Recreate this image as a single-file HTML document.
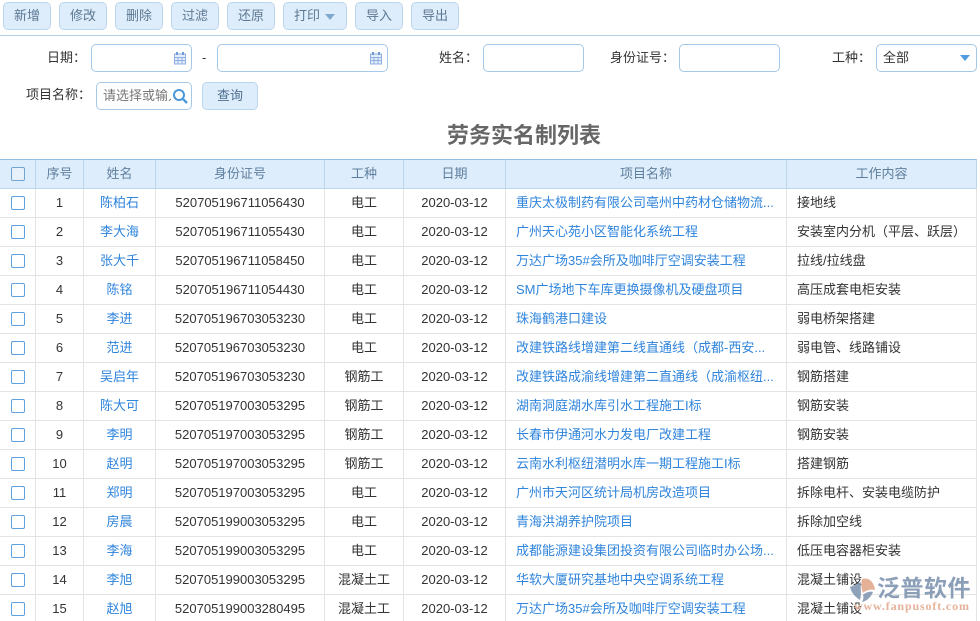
<!DOCTYPE html>
<html lang="zh"><head><meta charset="utf-8"><title>劳务实名制列表</title>
<style>
html,body{margin:0;padding:0;background:#fff}
#p{position:relative;width:980px;height:621px;overflow:hidden;background:#fff;font:13px/1 "Liberation Sans","Noto Sans CJK SC",sans-serif;color:#333}
#p *{box-sizing:border-box}
.a{position:absolute}
.b{position:absolute;top:2px;height:28px;width:48px;border:1px solid #bcd6ec;border-radius:5px;background:#deedfb;color:#5c7892;text-align:center;line-height:26px;font-size:13px}
.l{position:absolute;line-height:16px;color:#333;white-space:pre}
.i{position:absolute;height:28px;border:1px solid #a5c8e6;border-radius:5px;background:#fff}
.cal{position:absolute;right:4px;top:6px}
table{position:absolute;left:0;top:159px;width:977px;border-collapse:separate;border-spacing:0;table-layout:fixed;font-size:13px}
th,td{padding:0 0 2px;text-align:center;overflow:hidden;white-space:nowrap}
th{height:30px;background:#deedfb;color:#5f7f9e;font-weight:normal;border-top:1px solid #8fbce2;border-right:1px solid #bcd6ec;border-bottom:1px solid #bcd6ec}
td{height:29px;border-right:1px solid #e3e3e3;border-bottom:1px solid #e3e3e3;color:#333}
td.n{color:#2f84dc}
td.t{text-align:left;padding-left:10px;color:#2f84dc}
td.c{text-align:left;padding-left:10px}
.k{display:inline-block;position:relative;top:1px;width:14px;height:14px;border:1px solid #5da2de;border-radius:2px;background:#fff;vertical-align:middle}
th .k{border-color:#6fa6d6;background:#e6f1fb}
</style></head><body><div id="p">
<div class="b" style="left:3px">新增</div>
<div class="b" style="left:59px">修改</div>
<div class="b" style="left:115px">删除</div>
<div class="b" style="left:171px">过滤</div>
<div class="b" style="left:227px">还原</div>
<div class="b" style="left:283px;width:64px;text-align:left;padding-left:10px">打印<span class="a" style="left:41px;top:11px;width:0;height:0;border-left:5px solid transparent;border-right:5px solid transparent;border-top:6px solid #7fa8d0"></span></div>
<div class="b" style="left:355px">导入</div>
<div class="b" style="left:411px">导出</div>
<div class="a" style="left:0;top:35px;width:980px;height:1px;background:#b5cfe6"></div>

<div class="l" style="left:47px;top:50px">日期：</div>
<div class="i" style="left:91px;top:44px;width:101px"><svg class="cal" width="14" height="14" viewBox="0 0 14 14"><rect x="1.5" y="3" width="11" height="10" fill="#e4ecfa" stroke="#8fb0e0"/><path d="M1.5 6.5h11M1.5 9.5h11M5 6.5v6.5M9 6.5v6.5" stroke="#8fb0e0"/><path d="M4 1v3M10 1v3" stroke="#6f98d8" stroke-width="2"/></svg></div>
<div class="l" style="left:202px;top:50px">-</div>
<div class="i" style="left:217px;top:44px;width:171px"><svg class="cal" width="14" height="14" viewBox="0 0 14 14"><rect x="1.5" y="3" width="11" height="10" fill="#e4ecfa" stroke="#8fb0e0"/><path d="M1.5 6.5h11M1.5 9.5h11M5 6.5v6.5M9 6.5v6.5" stroke="#8fb0e0"/><path d="M4 1v3M10 1v3" stroke="#6f98d8" stroke-width="2"/></svg></div>
<div class="l" style="left:439px;top:50px">姓名：</div>
<div class="i" style="left:483px;top:44px;width:101px"></div>
<div class="l" style="left:610px;top:50px">身份证号：</div>
<div class="i" style="left:679px;top:44px;width:101px"></div>
<div class="l" style="left:832px;top:50px">工种：</div>
<div class="i" style="left:876px;top:44px;width:101px"><span class="a" style="left:6px;top:5px;line-height:16px">全部</span><span class="a" style="left:83px;top:10px;width:0;height:0;border-left:5px solid transparent;border-right:5px solid transparent;border-top:6px solid #4f9be0"></span></div>
<div class="l" style="left:26px;top:87px">项目名称：</div>
<div class="i" style="left:96px;top:82px;width:96px"><span class="a" style="left:6px;top:5px;width:68px;overflow:hidden;line-height:16px;color:#777;white-space:nowrap">请选择或输入</span><svg class="a" style="left:75px;top:5px" width="17" height="17" viewBox="0 0 17 17"><circle cx="7" cy="7" r="5" fill="none" stroke="#4a97dc" stroke-width="2"/><path d="M10.8 10.8L15 15" stroke="#4a97dc" stroke-width="2.4"/></svg></div>
<div class="b" style="left:202px;top:82px;width:56px;color:#4f6f8f">查询</div>
<div class="a" style="left:0;top:124px;width:1048px;text-align:center;font-size:22px;font-weight:bold;line-height:24px;color:#666">劳务实名制列表</div>

<table>
<colgroup><col style="width:36px"><col style="width:48px"><col style="width:72px"><col style="width:169px"><col style="width:79px"><col style="width:102px"><col style="width:281px"><col style="width:190px"></colgroup>
<tr><th><span class="k"></span></th><th>序号</th><th>姓名</th><th>身份证号</th><th>工种</th><th>日期</th><th>项目名称</th><th>工作内容</th></tr>
<tr><td><span class="k"></span></td><td>1</td><td class="n">陈柏石</td><td>520705196711056430</td><td>电工</td><td>2020-03-12</td><td class="t">重庆太极制药有限公司亳州中药材仓储物流...</td><td class="c">接地线</td></tr>
<tr><td><span class="k"></span></td><td>2</td><td class="n">李大海</td><td>520705196711055430</td><td>电工</td><td>2020-03-12</td><td class="t">广州天心苑小区智能化系统工程</td><td class="c">安装室内分机（平层、跃层）</td></tr>
<tr><td><span class="k"></span></td><td>3</td><td class="n">张大千</td><td>520705196711058450</td><td>电工</td><td>2020-03-12</td><td class="t">万达广场35#会所及咖啡厅空调安装工程</td><td class="c">拉线/拉线盘</td></tr>
<tr><td><span class="k"></span></td><td>4</td><td class="n">陈铭</td><td>520705196711054430</td><td>电工</td><td>2020-03-12</td><td class="t">SM广场地下车库更换摄像机及硬盘项目</td><td class="c">高压成套电柜安装</td></tr>
<tr><td><span class="k"></span></td><td>5</td><td class="n">李进</td><td>520705196703053230</td><td>电工</td><td>2020-03-12</td><td class="t">珠海鹤港口建设</td><td class="c">弱电桥架搭建</td></tr>
<tr><td><span class="k"></span></td><td>6</td><td class="n">范进</td><td>520705196703053230</td><td>电工</td><td>2020-03-12</td><td class="t">改建铁路线增建第二线直通线（成都-西安...</td><td class="c">弱电管、线路铺设</td></tr>
<tr><td><span class="k"></span></td><td>7</td><td class="n">吴启年</td><td>520705196703053230</td><td>钢筋工</td><td>2020-03-12</td><td class="t">改建铁路成渝线增建第二直通线（成渝枢纽...</td><td class="c">钢筋搭建</td></tr>
<tr><td><span class="k"></span></td><td>8</td><td class="n">陈大可</td><td>520705197003053295</td><td>钢筋工</td><td>2020-03-12</td><td class="t">湖南洞庭湖水库引水工程施工I标</td><td class="c">钢筋安装</td></tr>
<tr><td><span class="k"></span></td><td>9</td><td class="n">李明</td><td>520705197003053295</td><td>钢筋工</td><td>2020-03-12</td><td class="t">长春市伊通河水力发电厂改建工程</td><td class="c">钢筋安装</td></tr>
<tr><td><span class="k"></span></td><td>10</td><td class="n">赵明</td><td>520705197003053295</td><td>钢筋工</td><td>2020-03-12</td><td class="t">云南水利枢纽潜明水库一期工程施工I标</td><td class="c">搭建钢筋</td></tr>
<tr><td><span class="k"></span></td><td>11</td><td class="n">郑明</td><td>520705197003053295</td><td>电工</td><td>2020-03-12</td><td class="t">广州市天河区统计局机房改造项目</td><td class="c">拆除电杆、安装电缆防护</td></tr>
<tr><td><span class="k"></span></td><td>12</td><td class="n">房晨</td><td>520705199003053295</td><td>电工</td><td>2020-03-12</td><td class="t">青海洪湖养护院项目</td><td class="c">拆除加空线</td></tr>
<tr><td><span class="k"></span></td><td>13</td><td class="n">李海</td><td>520705199003053295</td><td>电工</td><td>2020-03-12</td><td class="t">成都能源建设集团投资有限公司临时办公场...</td><td class="c">低压电容器柜安装</td></tr>
<tr><td><span class="k"></span></td><td>14</td><td class="n">李旭</td><td>520705199003053295</td><td>混凝土工</td><td>2020-03-12</td><td class="t">华软大厦研究基地中央空调系统工程</td><td class="c">混凝土铺设</td></tr>
<tr><td><span class="k"></span></td><td>15</td><td class="n">赵旭</td><td>520705199003280495</td><td>混凝土工</td><td>2020-03-12</td><td class="t">万达广场35#会所及咖啡厅空调安装工程</td><td class="c">混凝土铺设</td></tr>
</table>

<svg class="a" style="left:850px;top:577px;opacity:.9" width="26" height="26" viewBox="0 0 26 26"><path d="M0 10L11 5C10 11 12 16 10 23C5 20 1 15 0 10Z" fill="#8498b2"/><path d="M12 2C18 0 24 4 25 13C21 12 16 13 13 16C11 11 11 6 12 2Z" fill="#e2a88d"/><path d="M13 18C16 15 20 14 23 15C21 20 17 24 12 25C13 23 14 21 13 18Z" fill="#8498b2"/></svg>
<div class="a" style="left:877px;top:574px;font-size:23px;line-height:28px;color:#8c9fb8;letter-spacing:.5px;font-weight:bold;white-space:nowrap">泛普软件</div>
<div class="a" style="left:854px;top:599px;font:bold 12px/14px 'Liberation Serif',serif;color:#e6b29a;letter-spacing:.85px;white-space:nowrap">www.fanpusoft.com</div>
</div></body></html>
